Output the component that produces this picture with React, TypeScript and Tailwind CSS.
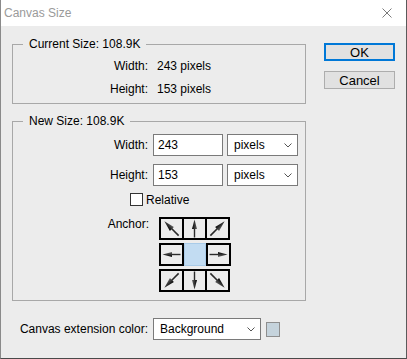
import React from 'react';

const font = { fontFamily: '"Liberation Sans", Arial, sans-serif' };

function Arrow({ angle }: { angle: number }) {
  const diag = angle % 90 !== 0;
  return (
    <svg width="21" height="19" viewBox="0 0 21 19">
      <defs>
        <linearGradient id={`g${angle + 360}`} x1="0" y1="0" x2="1" y2="0">
          <stop offset="0" stopColor="#000" />
          <stop offset="1" stopColor="#666" />
        </linearGradient>
      </defs>
      <g transform={`rotate(${angle} 10.5 9.5) ${diag ? 'translate(10.5 9.5) scale(1.12) translate(-10.5 -9.5)' : ''}`}>
        <line x1="10.5" y1="18.5" x2="10.5" y2="8" stroke="#2a2a2a" strokeWidth="1.4" />
        <polygon points="10.5,0.5 8,10 13,10" fill={`url(#g${angle + 360})`} />
      </g>
    </svg>
  );
}

function Cell({ angle, className = '' }: { angle: number; className?: string }) {
  return (
    <div className={`w-[25px] h-[23px] border-2 border-black flex items-center justify-center bg-[#ececec] ${className}`}>
      <Arrow angle={angle} />
    </div>
  );
}

function Select({ value, width }: { value: string; width: string }) {
  return (
    <div className={`${width} h-[22px] bg-white border border-[#7a7a7a] flex items-center justify-between pl-[6px] pr-[5px] text-[12px] text-black`}>
      <span>{value}</span>
      <svg width="8" height="5" viewBox="0 0 8 5">
        <polyline points="0.5,0.5 4,4 7.5,0.5" fill="none" stroke="#555" strokeWidth="1" />
      </svg>
    </div>
  );
}

export default function App() {
  return (
    <div className="w-[407px] h-[359px] bg-[#ececec] border-l border-r border-b border-l-[#8a8a8a] border-r-[#5a5a5a] border-b-[#4a4a4a] flex flex-col text-black text-[12px]" style={font}>
      {/* Title bar */}
      <div className="h-[26px] bg-white flex items-center justify-between pl-[3px] pr-[14px]">
        <span className="text-[12px] text-[#9a9a9a]">Canvas Size</span>
        <svg width="10" height="10" viewBox="0 0 10 10">
          <path d="M0.5 0.5 L9.5 9.5 M9.5 0.5 L0.5 9.5" stroke="#7a7a7a" strokeWidth="1" />
        </svg>
      </div>

      <div className="flex">
        {/* Left column */}
        <div className="ml-[11px] w-[294px] flex flex-col">
          {/* Current Size */}
          <div className="relative mt-[18px] h-[60px] border border-[#a8a8a8] pt-[13px] flex flex-col gap-[7px]">
            <span className="absolute -top-[8px] left-[10px] px-[6px] leading-[14px] bg-[#ececec]">Current Size: 108.9K</span>
            <div className="flex h-[16px] items-center">
              <span className="w-[135px] text-right">Width:</span>
              <span className="ml-[9px]">243 pixels</span>
            </div>
            <div className="flex h-[16px] items-center">
              <span className="w-[135px] text-right">Height:</span>
              <span className="ml-[9px]">153 pixels</span>
            </div>
          </div>

          {/* New Size */}
          <div className="relative mt-[17px] h-[180px] border border-[#a8a8a8] pt-[12px] flex flex-col">
            <span className="absolute -top-[8px] left-[10px] px-[6px] leading-[14px] bg-[#ececec]">New Size: 108.9K</span>
            <div className="flex items-center">
              <span className="w-[135px] text-right">Width:</span>
              <div className="ml-[5px] w-[70px] h-[22px] bg-white border border-[#7a7a7a] flex items-center pl-[4px]">243</div>
              <div className="ml-[4px]">
                <Select value="pixels" width="w-[71px]" />
              </div>
            </div>
            <div className="flex items-center mt-[8px]">
              <span className="w-[135px] text-right">Height:</span>
              <div className="ml-[5px] w-[70px] h-[22px] bg-white border border-[#7a7a7a] flex items-center pl-[4px]">153</div>
              <div className="ml-[4px]">
                <Select value="pixels" width="w-[71px]" />
              </div>
            </div>
            <div className="flex items-center mt-[7px] h-[13px]">
              <div className="ml-[117px] w-[13px] h-[13px] bg-white border border-[#333]" />
              <span className="ml-[3px]">Relative</span>
            </div>
            <div className="flex items-start mt-[11px]">
              <span className="w-[136px] text-right -mt-[2px]">Anchor:</span>
              <div className="ml-[10px] flex flex-col gap-[3px]">
                <div className="flex">
                  <Cell angle={-45} />
                  <Cell angle={0} className="-ml-[2px]" />
                  <Cell angle={45} className="-ml-[2px]" />
                </div>
                <div className="flex">
                  <Cell angle={-90} />
                  <div className="w-[22px] h-[23px] bg-[#c2dcf2] border border-[#a9cbe8]" />
                  <Cell angle={90} />
                </div>
                <div className="flex">
                  <Cell angle={-135} />
                  <Cell angle={180} className="-ml-[2px]" />
                  <Cell angle={135} className="-ml-[2px]" />
                </div>
              </div>
            </div>
          </div>

          {/* Canvas extension color */}
          <div className="flex items-center mt-[17px]">
            <span className="w-[136px] text-right">Canvas extension color:</span>
            <div className="ml-[5px]">
              <Select value="Background" width="w-[108px]" />
            </div>
            <div className="ml-[5px] w-[14px] h-[15px] bg-[#c5d3dc] border border-[#8e8e8e]" />
          </div>
        </div>

        {/* Right column */}
        <div className="ml-[18px] w-[71px] flex flex-col">
          <button className="mt-[17px] h-[18px] w-[71px] bg-[#e1e1e1] border-2 border-[#0078d7] text-[13px] leading-none flex items-center justify-center">
            OK
          </button>
          <button className="mt-[10px] h-[18px] w-[71px] bg-[#e1e1e1] border border-[#adadad] text-[13px] leading-none flex items-center justify-center">
            Cancel
          </button>
        </div>
      </div>
    </div>
  );
}
